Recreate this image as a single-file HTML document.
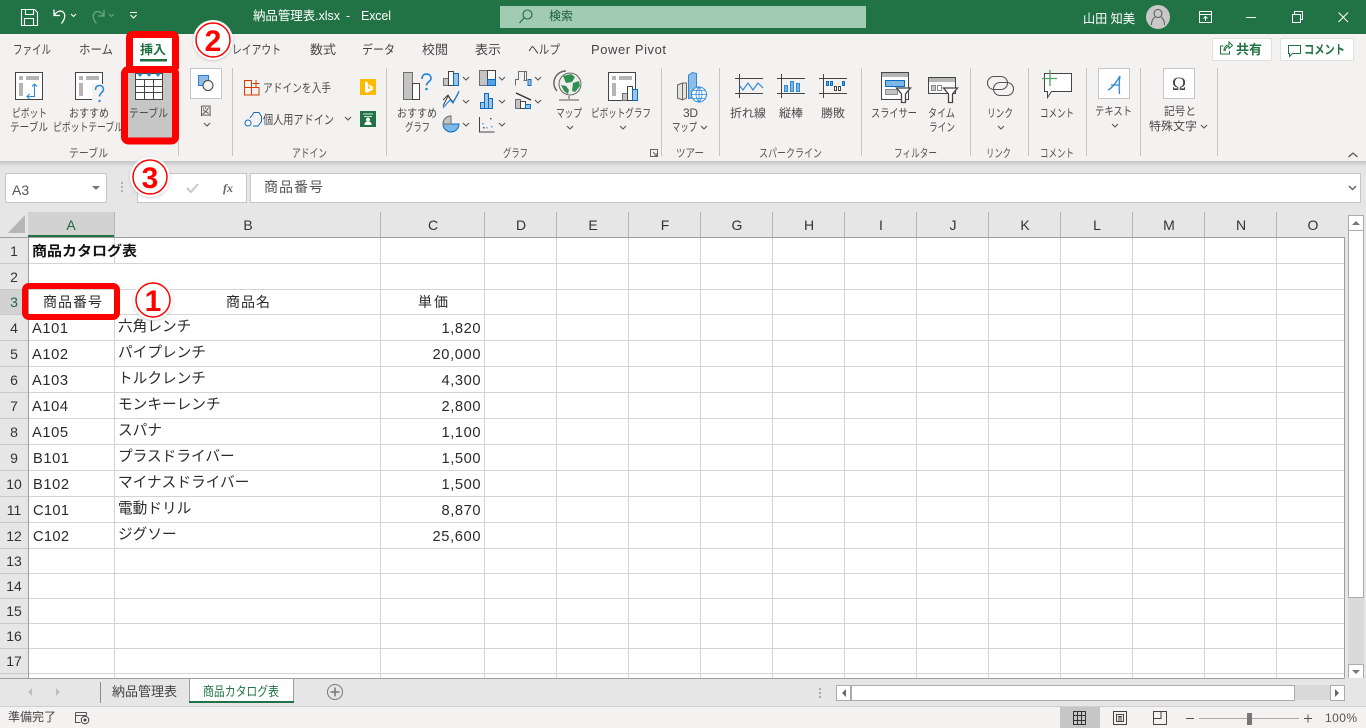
<!DOCTYPE html>
<html lang="ja"><head><meta charset="utf-8"><title>納品管理表.xlsx - Excel</title>
<style>
html,body{margin:0;padding:0;background:#fff;width:1366px;height:728px;overflow:hidden}
svg{display:block;position:absolute;left:0;top:0}
text{font-family:"Liberation Sans","Noto Sans CJK JP",sans-serif;font-size:12px;fill:#444}
.t{font-size:11.5px;fill:#4a4a4a}
.g{font-size:11.5px;fill:#555}
.tab{font-size:12.5px;fill:#444}
.c{font-size:14.67px;fill:#2b2b2b}
.h{font-size:14px;fill:#333}
.w{fill:#fff;font-size:12.5px}
.n{font-family:"Liberation Sans",serif;font-weight:700;fill:#f00;font-size:30px}
.sl{fill:none;stroke:#444;stroke-width:1}
.b{fill:#9dc3e6;stroke:#0f6cbd;stroke-width:1}
.y{fill:#c4c4c2;stroke:#6f6f6f;stroke-width:1}
.wh{fill:#fff;stroke:#444;stroke-width:1}
.ch{fill:none;stroke:#555;stroke-width:1.1}
</style></head><body>
<svg width="1366" height="728" viewBox="0 0 1366 728" xmlns="http://www.w3.org/2000/svg">
<defs>
<symbol id="cv" viewBox="0 0 8 5" width="8" height="5" overflow="visible"><path d="M1 1l3 3 3-3" class="ch"/></symbol>
<filter id="sh" x="-30%" y="-30%" width="160%" height="160%"><feGaussianBlur stdDeviation="1.4"/></filter>
<linearGradient id="rs" x1="0" y1="0" x2="0" y2="1"><stop offset="0" stop-color="#c4c4c4"/><stop offset="1" stop-color="#e6e6e6"/></linearGradient>
</defs>

<!-- backgrounds -->
<rect width="1366" height="728" fill="#e6e6e6"/>
<rect width="1366" height="34" fill="#217346"/>
<rect y="34" width="1366" height="127" fill="#f3f2f1"/>
<rect y="161" width="1366" height="6" fill="url(#rs)"/>

<!-- title bar -->
<g fill="none" stroke="#fff" stroke-width="1.1">
<path d="M21.5 9.5h13l3 3v13h-16zM25.5 9.5v5h8v-5M24.5 25.5v-7h9v7"/>
<path d="M54 9.5v6h6M54.5 15c2-3.500 6-5 8.500-3 3 2.500 2 7-1.500 11.500" stroke-width="1.3"/>
<path d="M71 14l2.500 2.500L76 14"/>
<g opacity=".35"><path d="M104 10v6h-6M103.500 15.500c-2-3.500-6-5-8.500-3-3 2.500-2 7 1.500 11" stroke-width="1.3"/><path d="M109 14l2.500 2.500L114 14"/></g>
<path d="M130 12.500h7M130.500 15l3 3 3-3"/>
</g>
<text x="253" y="20" class="w" textLength="87" lengthAdjust="spacingAndGlyphs">納品管理表.xlsx</text>
<text x="346" y="20" class="w">-</text>
<text x="361" y="20" class="w" textLength="30">Excel</text>
<rect x="500" y="6" width="366" height="22" fill="#a1ccb3"/>
<g fill="none" stroke="#1f6b41" stroke-width="1.1"><circle cx="527.500" cy="14.500" r="4.500"/><path d="M524 18l-4.500 5"/></g>
<text x="549" y="20" style="font-size:12px;fill:#1f5c3a" textLength="24" lengthAdjust="spacingAndGlyphs">検索</text>
<text x="1083" y="23" class="w" textLength="52" lengthAdjust="spacingAndGlyphs">山田 知美</text>
<circle cx="1158" cy="17" r="12" fill="#c8c8c8"/>
<g fill="none" stroke="#555" stroke-width="1"><circle cx="1158" cy="13.500" r="4"/><path d="M1151.500 25c0-5 2-7 3.500-8M1164.500 25c0-5-2-7-3.500-8"/></g>
<g fill="none" stroke="#fff" stroke-width="1">
<path d="M1199.500 11.500h12v11h-12zM1199.500 14.500h12M1205.500 21v-4.500M1203.500 18.500l2-2 2 2"/>
<path d="M1246 17.500h10"/>
<path d="M1292.500 14.500h8v8h-8zM1294.500 14v-2.500h8v8h-2"/>
<path d="M1338.500 12.500l9.500 9.500M1348 12.500l-9.500 9.500"/>
</g>

<!-- tabs -->
<text x="13" y="54" class="tab" textLength="38" lengthAdjust="spacingAndGlyphs">ファイル</text>
<text x="79" y="54" class="tab" textLength="34" lengthAdjust="spacingAndGlyphs">ホーム</text>
<text x="232" y="54" class="tab" textLength="49" lengthAdjust="spacingAndGlyphs">レイアウト</text>
<text x="310" y="54" class="tab" textLength="26" lengthAdjust="spacingAndGlyphs">数式</text>
<text x="362" y="54" class="tab" textLength="33" lengthAdjust="spacingAndGlyphs">データ</text>
<text x="422" y="54" class="tab" textLength="26" lengthAdjust="spacingAndGlyphs">校閲</text>
<text x="475" y="54" class="tab" textLength="26" lengthAdjust="spacingAndGlyphs">表示</text>
<text x="528" y="54" class="tab" textLength="32" lengthAdjust="spacingAndGlyphs">ヘルプ</text>
<text x="591" y="54" class="tab" style="font-size:13px" textLength="75">Power Pivot</text>

<!-- share / comment buttons -->
<rect x="1212.500" y="38.500" width="59" height="22" rx="1" fill="#fff" stroke="#e1dfdd"/>
<rect x="1280.500" y="38.500" width="73" height="22" rx="1" fill="#fff" stroke="#e1dfdd"/>
<path d="M1220.500 49v-3h3M1220.500 46v8h9v-3M1224 51c0-4 2-6 5-6v-3l3.500 3.500-3.500 3v-2c-2 0-3.500 1-4 4.500" fill="none" stroke="#217346"/>
<text x="1236" y="54" style="font-size:13px;font-weight:700;fill:#217346" textLength="26">共有</text>
<path d="M1288.500 45.500h12v8h-8l-3 3v-3h-1z" fill="none" stroke="#217346"/>
<text x="1304" y="54" style="font-size:12.500px;font-weight:700;fill:#217346" textLength="41" lengthAdjust="spacingAndGlyphs">コメント</text>

<!-- ribbon separators -->
<g stroke="#c6c6c6"><path d="M178.500 68v88M232.500 68v88M386.500 68v88M661.500 68v88M719.500 68v88M861.500 68v88M970.500 68v88M1028.500 68v88M1086.500 68v88M1140.500 68v88M1217.500 68v88"/></g>

<!-- pivot table -->
<rect x="15.500" y="72.500" width="27" height="27" fill="#fff" stroke="#444"/>
<g fill="#b5b5b3"><rect x="19" y="76" width="4" height="4"/><rect x="26" y="76" width="13" height="4"/><rect x="19" y="83" width="4" height="13"/></g>
<path d="M27.500 96.500h7v-12M32 86.500l2.500-2.500 2.500 2.500M29.500 94l-2.500 2.500 2.500 2.500" fill="none" stroke="#2d89d6" stroke-width="1.100"/>
<text x="12" y="117" class="t" textLength="35" lengthAdjust="spacingAndGlyphs">ピボット</text>
<text x="10" y="131" class="t" textLength="38" lengthAdjust="spacingAndGlyphs">テーブル</text>
<rect x="75.500" y="72.500" width="27" height="27" fill="#fff" stroke="#444"/>
<g fill="#b5b5b3"><rect x="79" y="76" width="4" height="4"/><rect x="86" y="76" width="13" height="4"/><rect x="79" y="83" width="4" height="13"/></g>
<rect x="92" y="84" width="14" height="19" fill="#f3f2f1"/>
<path d="M95.500 90c0-3 1.500-4.500 4-4.500s4 1.500 4 4c0 3-4 3.500-4 7" fill="none" stroke="#2d89d6" stroke-width="1.600"/><circle cx="99.500" cy="101" r="1.200" fill="#2d89d6"/>
<text x="69" y="117" class="t" textLength="40" lengthAdjust="spacingAndGlyphs">おすすめ</text>
<text x="53" y="131" class="t" textLength="70" lengthAdjust="spacingAndGlyphs">ピボットテーブル</text>
<text x="69" y="157" class="g" textLength="39" lengthAdjust="spacingAndGlyphs">テーブル</text>

<!-- table button highlighted -->
<rect x="126" y="70" width="48" height="70" fill="#c6c6c6"/>
<rect x="135.500" y="73.500" width="27" height="26" fill="#fff" stroke="#444"/>
<path d="M136 79.500h26M136 86.500h26M136 92.500h26M144.500 79v20M153.500 79v20" stroke="#444" fill="none"/>
<path d="M137 73.500h6l-3 3.500zM146 73.500h6l-3 3.500zM155 73.500h6l-3 3.500z" fill="#2d89d6"/>
<text x="129" y="117" class="t" textLength="39" lengthAdjust="spacingAndGlyphs">テーブル</text>

<!-- image group -->
<rect x="190.500" y="68.500" width="31" height="30" fill="#fff" stroke="#c6c6c6"/>
<rect x="198.500" y="75.500" width="10" height="10" fill="#8fbce6" stroke="#2b7cd3"/>
<circle cx="208" cy="85.500" r="5" fill="#f3f2f1" stroke="#444"/>
<text x="200" y="115" class="t">図</text>
<use href="#cv" x="203" y="122"/>

<!-- add-ins -->
<path d="M244.500 80.500h7v7h-7zM244.500 87.500h14.500v7.500h-14.500zM251.500 87.500v7.500M252.500 83.500h7M256 80v7" fill="none" stroke="#d83b01"/>
<text x="263" y="92" class="t" style="font-size:12px" textLength="68" lengthAdjust="spacingAndGlyphs">アドインを入手</text>
<rect x="360" y="79" width="16" height="16" fill="#ffb900"/>
<path d="M365 81.500l3 1v6.500l3-1-2-1-1-2.500 5 2v3l-6 3.500-2-1.500z" fill="#fff"/>
<path d="M250 118l4-5.500h5l2.500 4v5l-3.500 4.500h-5" fill="none" stroke="#0f6cbd"/><circle cx="248" cy="123" r="3" fill="#fff" stroke="#0f6cbd"/>
<text x="263" y="124" class="t" style="font-size:12.500px" textLength="71" lengthAdjust="spacingAndGlyphs">個人用アドイン</text>
<use href="#cv" x="344" y="116"/>
<rect x="360" y="111" width="16" height="16" fill="#217346"/>
<path d="M363 114h10M364 116.500h8" stroke="#cfe6d8"/><circle cx="368" cy="119.500" r="2" fill="#fff"/><path d="M364.500 125c0-2.500 1-3.500 3.500-3.500s3.500 1 3.500 3.500z" fill="#fff"/>
<text x="292" y="157" class="g" textLength="35" lengthAdjust="spacingAndGlyphs">アドイン</text>

<!-- charts -->
<rect x="403.500" y="72.500" width="9" height="27" class="y"/>
<rect x="412.500" y="83.500" width="7" height="16" class="wh"/>
<path d="M422 79c0-3 1.500-5 4.500-5s4.500 2 4.500 4.500c0 3-4.500 3.500-4.500 7" fill="none" stroke="#2d89d6" stroke-width="1.700"/><circle cx="426.500" cy="89" r="1.300" fill="#2d89d6"/>
<text x="397" y="117" class="t" textLength="40" lengthAdjust="spacingAndGlyphs">おすすめ</text>
<text x="405" y="131" class="t" textLength="25" lengthAdjust="spacingAndGlyphs">グラフ</text>

<rect x="443.500" y="78.500" width="5" height="7" class="y"/><rect x="448.500" y="71.500" width="5" height="14" class="wh"/><rect x="453.500" y="73.500" width="5" height="12" class="b"/>
<rect x="479.500" y="70.500" width="8" height="15" class="y"/><rect x="487.500" y="70.500" width="8" height="9" class="wh"/><rect x="487.500" y="79.500" width="8" height="6" fill="#5ba3e0" stroke="#0f6cbd"/>
<path d="M515.500 85.500v-6h3v-8h8v9h-3M524.500 80.500v-9" fill="none" stroke="#6f6f6f"/><rect x="528" y="79.500" width="3" height="6" class="b"/>
<path d="M443 100l5-5 5 8 5-9M443 106l5-10 5 6 6-10" fill="none" stroke="#444"/><path d="M443 108l7-8 3 3 6-12" fill="none" stroke="#2d89d6" stroke-width="1.200"/>
<g class="b"><rect x="480.500" y="102.500" width="4" height="6"/><rect x="484.500" y="93.500" width="4" height="15"/><rect x="488.500" y="98.500" width="4" height="10"/></g>
<rect x="515.500" y="99.500" width="5" height="9" class="y"/><rect x="520.500" y="101.500" width="5" height="7" class="wh"/><rect x="525.500" y="104.500" width="5" height="4" class="b"/><path d="M516 93l15 7" stroke="#333" stroke-width="1.500"/>
<path d="M451 116a8 8 0 1 0 8 8h-8z" fill="#7db7e8" stroke="#0f6cbd"/><path d="M451 116v8h-8a8 8 0 0 1 8-8z" fill="#c4c4c2" stroke="#6f6f6f"/>
<path d="M479.500 117v15h15" fill="none" stroke="#444"/><g fill="#5ba3e0"><rect x="482" y="123" width="1.500" height="1.500"/><rect x="486" y="127" width="1.500" height="1.500"/><rect x="491" y="126" width="1.500" height="1.500"/></g><g fill="#555"><rect x="483" y="127" width="1.500" height="1.500"/><rect x="490" y="118" width="1.500" height="1.500"/></g>
<use href="#cv" x="462" y="76"/><use href="#cv" x="498" y="76"/><use href="#cv" x="534" y="76"/>
<use href="#cv" x="462" y="99"/><use href="#cv" x="498" y="99"/><use href="#cv" x="534" y="99"/>
<use href="#cv" x="462" y="122"/><use href="#cv" x="498" y="122"/>

<!-- map -->
<path d="M566 71a12 12 0 0 0-9 20" fill="none" stroke="#666" stroke-width="1.500"/>
<circle cx="570" cy="84" r="11" fill="#eeeeec" stroke="#666"/>
<path d="M563 76l8-2 4 3-3 5-6 1zM573 83l6-2 1 5-5 6-3-1zM561 85l5 1 3 4-1 4-4-3z" fill="#2f8f4e"/>
<path d="M569 96v3M559 100h20" stroke="#555" fill="none"/>
<text x="556" y="117" class="t" textLength="26" lengthAdjust="spacingAndGlyphs">マップ</text>
<use href="#cv" x="566" y="125"/>
<!-- pivot chart -->
<rect x="608.500" y="72.500" width="27" height="28" fill="#fff" stroke="#444"/>
<g fill="#b5b5b3"><rect x="612" y="76" width="4" height="4"/><rect x="619" y="76" width="13" height="4"/><rect x="612" y="83" width="4" height="13"/></g>
<rect x="622.500" y="93.500" width="5" height="7" class="y"/><rect x="627.500" y="86.500" width="5" height="14" class="wh"/><rect x="632.500" y="89.500" width="5" height="11" class="b"/>
<text x="591" y="117" class="t" textLength="60" lengthAdjust="spacingAndGlyphs">ピボットグラフ</text>
<use href="#cv" x="619" y="125"/>
<text x="515" y="157" class="g" textLength="25" lengthAdjust="spacingAndGlyphs" transform="translate(-12 0)">グラフ</text>
<path d="M650.500 149.500h7v7h-7zM653 152l4 4M654 156h3v-3" fill="none" stroke="#666"/>

<!-- 3D map -->
<path d="M677.500 85l5-2h4v15l-4 2-5-2zM682.500 83v17" fill="#e3e3e1" stroke="#666"/>
<path d="M688.500 75l4-2.500 4 1v24l-8 1z" fill="#8fbce6" stroke="#2d89d6"/>
<circle cx="699" cy="94.500" r="7.500" fill="#fff" stroke="#2d89d6"/><path d="M691.500 94.500h15M699 87v15M693 90.500h12M693 98.500h12M699 87c-4 4-4 11 0 15M699 87c4 4 4 11 0 15" fill="none" stroke="#2d89d6" stroke-width=".8"/>
<text x="683" y="117" class="t" style="font-size:12px" textLength="15">3D</text>
<text x="672" y="131" class="t" textLength="25" lengthAdjust="spacingAndGlyphs">マップ</text>
<use href="#cv" x="700" y="125"/>
<text x="676" y="157" class="g" textLength="28" lengthAdjust="spacingAndGlyphs">ツアー</text>

<!-- sparklines -->
<g fill="none" stroke="#444"><path d="M735 78.500h28M735 93.500h28M739.500 74v24"/><path d="M777 78.500h28M777 93.500h28M781.500 74v24"/><path d="M819 78.500h28M819 93.500h28M823.500 74v24"/></g>
<path d="M740 86l3 4 5-7 5 7 5-7 5 5" fill="none" stroke="#2d89d6" stroke-width="1.200"/>
<g fill="#7db7e8" stroke="#2d89d6"><rect x="784.500" y="85.500" width="3" height="6"/><rect x="790.500" y="81.500" width="3" height="10"/><rect x="796.500" y="83.500" width="3" height="8"/></g>
<g fill="#5ba3e0" stroke="#0f6cbd"><rect x="826.500" y="81.500" width="2" height="4"/><rect x="830.500" y="81.500" width="2" height="4"/><rect x="842.500" y="81.500" width="2" height="4"/></g>
<g fill="#fff" stroke="#444"><rect x="834.500" y="86.500" width="2" height="4"/><rect x="838.500" y="86.500" width="2" height="4"/></g>
<text x="730" y="117" class="t" textLength="36" lengthAdjust="spacingAndGlyphs">折れ線</text>
<text x="779" y="117" class="t" textLength="24" lengthAdjust="spacingAndGlyphs">縦棒</text>
<text x="821" y="117" class="t" textLength="24" lengthAdjust="spacingAndGlyphs">勝敗</text>
<text x="759" y="157" class="g" textLength="63" lengthAdjust="spacingAndGlyphs">スパークライン</text>

<!-- filters -->
<rect x="881.500" y="72.500" width="27" height="27" fill="#fff" stroke="#444"/>
<rect x="882" y="73" width="26" height="4" fill="#b5b5b3"/>
<rect x="885.500" y="80.500" width="19" height="6" fill="#7db7e8" stroke="#0f6cbd"/>
<rect x="885.500" y="89.500" width="12" height="5" fill="#c4c4c2" stroke="#8a8a8a"/>
<path d="M896.500 88h14l-5 6v8.500h-4V94z" fill="#fff" stroke="#444" stroke-width="1.300"/>
<rect x="928.500" y="77.500" width="27" height="16" fill="#f8f8f8" stroke="#444"/>
<rect x="929" y="78" width="26" height="4" fill="#b5b5b3"/>
<rect x="931.500" y="85.500" width="4" height="5" fill="#c4c4c2" stroke="#8a8a8a"/><rect x="937.500" y="85.500" width="4" height="5" fill="#fff" stroke="#8a8a8a"/>
<path d="M943.500 88h14l-5 6v8.500h-4V94z" fill="#fff" stroke="#444" stroke-width="1.300"/>
<text x="871" y="117" class="t" textLength="46" lengthAdjust="spacingAndGlyphs">スライサー</text>
<text x="928" y="117" class="t" textLength="27" lengthAdjust="spacingAndGlyphs">タイム</text>
<text x="929" y="131" class="t" textLength="26" lengthAdjust="spacingAndGlyphs">ライン</text>
<text x="894" y="157" class="g" textLength="43" lengthAdjust="spacingAndGlyphs">フィルター</text>

<!-- link -->
<g fill="none" stroke="#555" stroke-width="1.100"><rect x="987.500" y="76.500" width="20" height="13" rx="6.500"/><rect x="993.500" y="82.500" width="20" height="13" rx="6.500"/></g>
<text x="987" y="117" class="t" textLength="26" lengthAdjust="spacingAndGlyphs">リンク</text>
<use href="#cv" x="997" y="125"/>
<text x="986" y="157" class="g" textLength="25" lengthAdjust="spacingAndGlyphs">リンク</text>

<!-- comment -->
<path d="M1044.500 73.500h27v18h-20l-4 6v-6h-3z" fill="#fff" stroke="#444"/>
<path d="M1042 78.500h15M1050 70v16" stroke="#4aa564" stroke-width="1.300" fill="none"/>
<text x="1040" y="117" class="t" textLength="34" lengthAdjust="spacingAndGlyphs">コメント</text>
<text x="1040" y="157" class="g" textLength="34" lengthAdjust="spacingAndGlyphs">コメント</text>

<!-- text -->
<rect x="1098.500" y="68.500" width="31" height="30" fill="#fff" stroke="#c6c6c6"/>
<path d="M1108 90c4-2 8-7 12-14-1 6-1 12-.5 18M1111 85h8" fill="none" stroke="#2d89d6" stroke-width="1.300"/>
<text x="1095" y="115" class="t" textLength="37" lengthAdjust="spacingAndGlyphs">テキスト</text>
<use href="#cv" x="1111" y="123"/>
<!-- symbol -->
<rect x="1163.500" y="68.500" width="31" height="30" fill="#fff" stroke="#c6c6c6"/>
<text x="1172" y="90" style="font-size:19px;fill:#444;font-family:'Liberation Serif',serif">Ω</text>
<text x="1164" y="115" class="t" textLength="32" lengthAdjust="spacingAndGlyphs">記号と</text>
<text x="1149" y="130" class="t" textLength="48" lengthAdjust="spacingAndGlyphs">特殊文字</text>
<use href="#cv" x="1200" y="124"/>
<path d="M1348.500 157l4.500-4 4.500 4" fill="none" stroke="#555" stroke-width="1.200"/>

<!-- formula bar -->
<rect x="5.500" y="173.500" width="101" height="29" fill="#fff" stroke="#c6c6c6"/>
<text x="12" y="195" style="font-size:14px;fill:#555">A3</text>
<path d="M92 186h8l-4 4z" fill="#777"/>
<g fill="#b0b0b0"><rect x="121" y="182" width="2" height="2"/><rect x="121" y="186" width="2" height="2"/><rect x="121" y="190" width="2" height="2"/></g>
<rect x="137.500" y="173.500" width="109" height="29" fill="#fff" stroke="#c6c6c6"/>
<path d="M187 188l4 4 7-8" fill="none" stroke="#c8c8c8" stroke-width="2"/>
<text x="223" y="192" style="font-family:'Liberation Serif',serif;font-style:italic;font-weight:700;font-size:12px;fill:#666">fx</text>
<rect x="250.500" y="173.500" width="1110" height="29" fill="#fff" stroke="#c6c6c6"/>
<text x="264" y="192" style="font-size:14px;fill:#555" textLength="59" lengthAdjust="spacing">商品番号</text>
<path d="M1349 186l3.500 3.500 3.500-3.500" fill="none" stroke="#666" stroke-width="1.500"/>

<!-- sheet -->
<rect x="29" y="238" width="1315" height="440" fill="#fff"/>
<rect y="212" width="1345" height="25" fill="#e6e6e6"/>
<rect x="0" y="237" width="28" height="441" fill="#e6e6e6"/>
<path d="M25 215v18H8z" fill="#b5b5b5"/>
<rect x="28" y="212" width="87" height="24" fill="#d2d2d2"/>
<rect x="28" y="235" width="87" height="2" fill="#217346"/>
<rect x="0" y="289" width="28" height="25" fill="#d2d2d2"/>
<path d="M28.500 237v441" stroke="#9e9e9e"/>
<path d="M0 237.500h1344.500v440" fill="none" stroke="#9e9e9e"/>
<g stroke="#d4d4d4" fill="none">
<path d="M114.500 238v26M114.500 289v389M380.500 238v440M484.500 238v440M556.500 238v440M628.500 238v440M700.500 238v440M772.500 238v440M844.500 238v440M916.500 238v440M988.500 238v440M1060.500 238v440M1132.500 238v440M1204.500 238v440M1276.500 238v440"/>
<path d="M29 263.500h1315M29 289.500h1315M29 314.500h1315M29 340.500h1315M29 366.500h1315M29 392.500h1315M29 418.500h1315M29 444.500h1315M29 470.500h1315M29 496.500h1315M29 522.500h1315M29 548.500h1315M29 573.500h1315M29 598.500h1315M29 623.500h1315M29 648.500h1315M29 673.500h1315"/>
</g>
<g stroke="#c8c8c8" fill="none"><path d="M0 263.500h28M0 289.500h28M0 314.500h28M0 340.500h28M0 366.500h28M0 392.500h28M0 418.500h28M0 444.500h28M0 470.500h28M0 496.500h28M0 522.500h28M0 548.500h28M0 573.500h28M0 598.500h28M0 623.500h28M0 648.500h28M0 673.500h28"/></g>
<g stroke="#b5b5b5" fill="none"><path d="M114.500 212v25M380.500 212v25M484.500 212v25M556.500 212v25M628.500 212v25M700.500 212v25M772.500 212v25M844.500 212v25M916.500 212v25M988.500 212v25M1060.500 212v25M1132.500 212v25M1204.500 212v25M1276.500 212v25"/></g>
<!-- col headers -->
<g class="h" text-anchor="middle">
<text x="71" y="230" class="h" style="fill:#1e6a3f">A</text><text x="248" y="230" class="h">B</text><text x="433" y="230" class="h">C</text><text x="521" y="230" class="h">D</text><text x="593" y="230" class="h">E</text><text x="665" y="230" class="h">F</text><text x="737" y="230" class="h">G</text><text x="809" y="230" class="h">H</text><text x="881" y="230" class="h">I</text><text x="953" y="230" class="h">J</text><text x="1025" y="230" class="h">K</text><text x="1097" y="230" class="h">L</text><text x="1169" y="230" class="h">M</text><text x="1241" y="230" class="h">N</text><text x="1313" y="230" class="h">O</text>
</g>
<!-- row headers -->
<g text-anchor="middle">
<text x="14" y="256" class="h">1</text><text x="14" y="282" class="h">2</text><text x="14" y="307" class="h" style="fill:#1e6a3f">3</text><text x="14" y="333" class="h">4</text><text x="14" y="359" class="h">5</text><text x="14" y="385" class="h">6</text><text x="14" y="411" class="h">7</text><text x="14" y="437" class="h">8</text><text x="14" y="463" class="h">9</text><text x="14" y="489" class="h">10</text><text x="14" y="515" class="h">11</text><text x="14" y="541" class="h">12</text><text x="14" y="566" class="h">13</text><text x="14" y="591" class="h">14</text><text x="14" y="616" class="h">15</text><text x="14" y="641" class="h">16</text><text x="14" y="666" class="h">17</text>
</g>
<!-- cells -->
<text x="32" y="256" class="c" style="font-size:14px;font-weight:700;fill:#111" textLength="105" lengthAdjust="spacingAndGlyphs">商品カタログ表</text>
<text x="43" y="307" class="c" style="font-size:14px" textLength="59" lengthAdjust="spacing">商品番号</text>
<text x="226" y="307" class="c" style="font-size:14px" textLength="44" lengthAdjust="spacing">商品名</text>
<text x="418" y="307" class="c" style="font-size:14px" textLength="30" lengthAdjust="spacing">単価</text>
<text x="32" y="333" class="c" textLength="36">A101</text><text x="32" y="359" class="c" textLength="36">A102</text><text x="32" y="385" class="c" textLength="36">A103</text><text x="32" y="411" class="c" textLength="36">A104</text><text x="32" y="437" class="c" textLength="36">A105</text><text x="33" y="463" class="c" textLength="36">B101</text><text x="33" y="489" class="c" textLength="36">B102</text><text x="33" y="515" class="c" textLength="36">C101</text><text x="33" y="541" class="c" textLength="36">C102</text>
<text x="118" y="331" class="c">六角レンチ</text><text x="118" y="357" class="c">パイプレンチ</text><text x="118" y="383" class="c">トルクレンチ</text><text x="118" y="409" class="c">モンキーレンチ</text><text x="118" y="435" class="c">スパナ</text><text x="118" y="461" class="c">プラスドライバー</text><text x="118" y="487" class="c">マイナスドライバー</text><text x="118" y="513" class="c">電動ドリル</text><text x="118" y="539" class="c">ジグソー</text>
<text x="441.500" y="333" class="c" textLength="39">1,820</text><text x="432.500" y="359" class="c" textLength="48">20,000</text><text x="441.500" y="385" class="c" textLength="39">4,300</text><text x="441.500" y="411" class="c" textLength="39">2,800</text><text x="441.500" y="437" class="c" textLength="39">1,100</text><text x="441.500" y="463" class="c" textLength="39">1,500</text><text x="441.500" y="489" class="c" textLength="39">1,500</text><text x="441.500" y="515" class="c" textLength="39">8,870</text><text x="432.500" y="541" class="c" textLength="48">25,600</text>

<!-- v scrollbar -->
<rect x="1345" y="212" width="21" height="467" fill="#e6e6e6"/>
<rect x="1348" y="215" width="16" height="464" fill="#dadada"/>
<rect x="1348.500" y="230.500" width="15" height="367" fill="#fff" stroke="#ababab"/>
<rect x="1348.500" y="215.500" width="15" height="15" fill="#fff" stroke="#ababab"/>
<rect x="1348.500" y="664.500" width="15" height="15" fill="#fff" stroke="#ababab"/>
<path d="M1352 225l4-4 4 4z" fill="#777"/><path d="M1352 670l4 4 4-4z" fill="#777"/>

<!-- tabs bar -->
<rect y="678" width="1366" height="28" fill="#e6e6e6"/>
<path d="M0 678.500h1345" stroke="#9e9e9e"/>
<path d="M100.500 682v21" stroke="#8a8a8a"/>
<path d="M32 688v8l-4-4zM56 688v8l4-4z" fill="#bdbdbd"/>
<text x="112" y="696" style="font-size:13px;fill:#444" textLength="65" lengthAdjust="spacing">納品管理表</text>
<path d="M189.500 678.500v24h104v-24z" fill="#fff" stroke="#9e9e9e"/>
<rect x="189" y="701" width="105" height="2" fill="#217346"/>
<text x="203" y="696" style="font-size:13px;fill:#217346" textLength="76" lengthAdjust="spacingAndGlyphs">商品カタログ表</text>
<circle cx="335" cy="692" r="7.500" fill="none" stroke="#777"/><path d="M330.500 692h9M335 687.500v9" stroke="#777" stroke-width="1.500"/>
<g fill="#aaa"><rect x="819" y="688" width="2" height="2"/><rect x="819" y="692" width="2" height="2"/><rect x="819" y="696" width="2" height="2"/></g>
<rect x="836" y="685" width="509" height="15" fill="#d9d9d9"/>
<rect x="836.500" y="685.500" width="14" height="15" fill="#fff" stroke="#ababab"/>
<rect x="851.500" y="685.500" width="443" height="15" fill="#fff" stroke="#ababab"/>
<rect x="1330.500" y="685.500" width="14" height="15" fill="#fff" stroke="#ababab"/>
<path d="M846 689v8l-4-4zM1335 689v8l4-4z" fill="#666"/>

<!-- status bar -->
<rect y="706" width="1366" height="22" fill="#f3f2f1"/>
<path d="M0 706.500h1366" stroke="#cfcfcf"/>
<text x="8" y="721" style="font-size:12px;fill:#444" textLength="48" lengthAdjust="spacing">準備完了</text>
<path d="M75.500 712.500h11M75.500 712.500v10h5M75.500 715.500h11M86.500 712.500v3" fill="none" stroke="#555"/><circle cx="85" cy="720" r="3.800" fill="none" stroke="#444"/><circle cx="85" cy="720" r="1.500" fill="#444"/>
<rect x="1060" y="707" width="40" height="21" fill="#c6c6c6"/>
<path d="M1073.500 711.500h12v13h-12zM1077.500 711.500v13M1081.500 711.500v13M1073.500 715.500h12M1073.500 720.500h12" fill="none" stroke="#333"/>
<path d="M1113.500 711.500h13v13h-13z" fill="none" stroke="#444"/><path d="M1116.500 714.500h7v7h-7zM1118 716.500h4M1118 718h4M1118 720h4" fill="none" stroke="#444"/>
<path d="M1153.500 711.500h13v13h-13zM1153.500 718.500h7.500v-7" fill="none" stroke="#444"/>
<path d="M1186 718.500h8M1304 718.500h8M1308 714.500v8" stroke="#555" fill="none"/>
<path d="M1199 718.500h100" stroke="#aaa"/>
<rect x="1247" y="713" width="5" height="12" fill="#777"/>
<text x="1325" y="722" style="font-size:12px;fill:#555" textLength="32">100%</text>

<!-- red highlights -->
<path d="M133 38h39v28h-39z" fill="#fff"/>
<text x="140" y="54" style="font-size:12.500px;font-weight:700;fill:#217346" textLength="26" lengthAdjust="spacingAndGlyphs">挿入</text>
<rect x="140" y="59" width="27" height="2.500" fill="#217346"/>
<path d="M129.500 69V38q0-3.500 3.500-3.500h39q3.500 0 3.500 3.500v31" fill="none" stroke="#f00" stroke-width="7"/>
<rect x="124.500" y="69.500" width="51" height="71.500" rx="4" fill="none" stroke="#f00" stroke-width="7"/>
<rect x="25" y="286" width="92" height="31" rx="4" fill="none" stroke="#f00" stroke-width="6"/>

<!-- numbered badges -->
<g>
<circle cx="213" cy="41" r="20" fill="#777" opacity=".35" filter="url(#sh)"/><circle cx="213" cy="40" r="20" fill="#fff"/><circle cx="213" cy="40" r="17" fill="#fff" stroke="#f00" stroke-width="1.500"/>
<text x="213" y="51" class="n" text-anchor="middle">2</text>
<circle cx="153" cy="301" r="20" fill="#777" opacity=".35" filter="url(#sh)"/><circle cx="153" cy="300" r="20" fill="#fff"/><circle cx="153" cy="300" r="17" fill="#fff" stroke="#f00" stroke-width="1.500"/>
<text x="153" y="311" class="n" text-anchor="middle">1</text>
<circle cx="150" cy="178" r="20" fill="#777" opacity=".35" filter="url(#sh)"/><circle cx="150" cy="177" r="20" fill="#fff"/><circle cx="150" cy="177" r="17" fill="#fff" stroke="#f00" stroke-width="1.500"/>
<text x="150" y="188" class="n" text-anchor="middle">3</text>
</g>
</svg>
</body></html>
